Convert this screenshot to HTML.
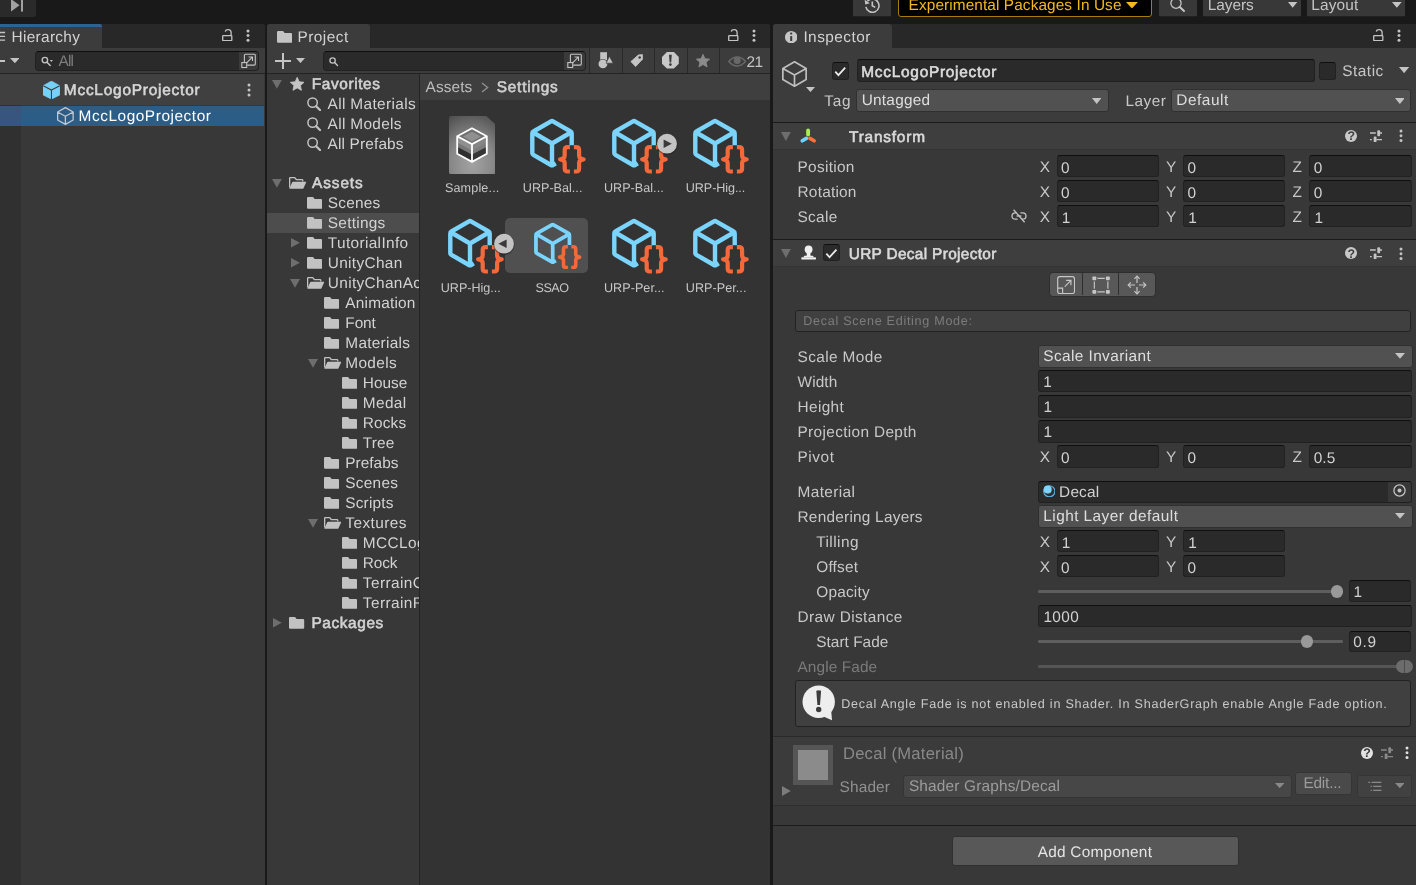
<!DOCTYPE html>
<html><head><meta charset="utf-8"><title>Unity Editor</title>
<style>
html,body{margin:0;padding:0;background:#191919;}
body{width:1416px;height:885px;position:relative;overflow:hidden;font-family:"Liberation Sans",sans-serif;font-size:15.4px;color:#d2d2d2;text-rendering:geometricPrecision;}
#r div,#r span,#r svg{position:absolute;box-sizing:border-box;}
#r span{white-space:nowrap;display:block;line-height:20px;}
#r{position:absolute;left:0;top:0;width:1416px;height:885px;overflow:hidden;will-change:transform;}
</style></head><body><div id="r">
<div style="left:0.00px;top:0.00px;width:1416.00px;height:24.00px;background:#191919;"></div>
<div style="left:0.00px;top:-3.00px;width:36.40px;height:20.20px;background:#2a2a2a;border-radius:0 0 2px 0;"></div>
<svg style="left:11.00px;top:0.00px;" width="13" height="12" viewBox="0 0 13 12"><path d="M0 -1V11.6L8.6 5.3Z" fill="#a2a2a2"/><rect x="10" y="-1" width="2" height="12.6" fill="#a2a2a2"/></svg>
<div style="left:853.10px;top:-3.00px;width:37.80px;height:20.40px;background:#383838;border-bottom:1.5px solid #212121;"></div>
<svg style="left:863.80px;top:-2.70px;" width="16.6" height="16.6" viewBox="0 0 16 16"><path d="M3.2 4.2A6.4 6.4 0 1 1 1.8 9.6" fill="none" stroke="#c4c4c4" stroke-width="1.5"/><path d="M0.6 2.6L1.2 7.2L5.6 6Z" fill="#c4c4c4"/><path d="M8 4.4V8.4L10.8 10" fill="none" stroke="#c4c4c4" stroke-width="1.5"/></svg>
<div style="left:898.00px;top:-4.00px;width:253.80px;height:20.70px;background:#000;border:1px solid #a67c10;border-radius:3px;"></div>
<span style="left:908.60px;top:-4px;font-size:15.4px;letter-spacing:0.089px;color:#f2b822;">Experimental Packages In Use</span>
<svg style="left:1125.90px;top:1.90px;" width="11.90" height="6.50" viewBox="0 0 11.90 6.50"><path d="M0 0H11.90L5.95 6.50Z" fill="#f2b822"/></svg>
<div style="left:1158.80px;top:-3.00px;width:38.20px;height:20.40px;background:#383838;border-bottom:1.5px solid #212121;"></div>
<svg style="left:1170.40px;top:-2.00px;" width="16" height="15" viewBox="0 0 16 15"><circle cx="6" cy="5.2" r="5.1" fill="none" stroke="#c4c4c4" stroke-width="1.3"/><path d="M9.8 9L14 13" stroke="#c4c4c4" stroke-width="2" stroke-linecap="round"/></svg>
<div style="left:1203.00px;top:-3.00px;width:97.80px;height:20.40px;background:#383838;border-bottom:1.5px solid #212121;"></div>
<span style="left:1207.80px;top:-4px;font-size:15.4px;letter-spacing:-0.040px;color:#c4c4c4;">Layers</span>
<svg style="left:1288.30px;top:2.10px;" width="9.30" height="5.80" viewBox="0 0 9.30 5.80"><path d="M0 0H9.30L4.65 5.80Z" fill="#c4c4c4"/></svg>
<div style="left:1306.70px;top:-3.00px;width:98.60px;height:20.40px;background:#383838;border-bottom:1.5px solid #212121;"></div>
<span style="left:1311.30px;top:-4px;font-size:15.4px;letter-spacing:0.160px;color:#c4c4c4;">Layout</span>
<svg style="left:1391.90px;top:2.10px;" width="9.70" height="5.80" viewBox="0 0 9.70 5.80"><path d="M0 0H9.70L4.85 5.80Z" fill="#c4c4c4"/></svg>
<div style="left:0.00px;top:24.00px;width:265.00px;height:861.00px;background:#383838;border-radius:0 3px 0 0;"></div>
<div style="left:0.00px;top:24.00px;width:265.00px;height:24.00px;background:#282828;border-radius:0 4px 0 0;"></div>
<div style="left:0.00px;top:24.00px;width:102.00px;height:24.00px;background:#3c3c3c;border-radius:0 2px 0 0;overflow:hidden;"><div style="left:0;top:0;width:102px;height:2.8px;background:#2d6291;"></div></div>
<svg style="left:0.00px;top:31.00px;" width="6" height="12" viewBox="0 0 6 12"><path d="M-4 1.5H5.1M-4 5.35H5.1M-4 9.2H5.1" stroke="#c4c4c4" stroke-width="1.3"/></svg>
<span style="left:11.50px;top:28px;font-size:15.4px;letter-spacing:0.325px;color:#d2d2d2;">Hierarchy</span>
<svg style="left:221.60px;top:28.60px;" width="11" height="12.5" viewBox="0 0 11 12.5"><rect x="0.7" y="6.6" width="9.1" height="5" rx="0.6" fill="none" stroke="#c4c4c4" stroke-width="1.3"/><path d="M9.1 6.4V3.6Q9.1 0.7 6.2 0.7Q3.6 0.7 3.3 2.6" fill="none" stroke="#c4c4c4" stroke-width="1.3"/></svg>
<svg style="left:245.00px;top:27.60px;" width="6" height="15.20" viewBox="0 0 6 15.20"><circle cx="3" cy="3.00" r="1.5" fill="#c4c4c4"/><circle cx="3" cy="7.60" r="1.5" fill="#c4c4c4"/><circle cx="3" cy="12.20" r="1.5" fill="#c4c4c4"/></svg>
<div style="left:0.00px;top:48.00px;width:265.00px;height:26.20px;background:#3c3c3c;border-bottom:1px solid #232323;"></div>
<div style="left:-2.00px;top:59.80px;width:6.70px;height:2.30px;background:#c4c4c4;"></div>
<svg style="left:9.60px;top:58.20px;" width="9.80" height="5.20" viewBox="0 0 9.80 5.20"><path d="M0 0H9.80L4.90 5.20Z" fill="#c4c4c4"/></svg>
<div style="left:35.10px;top:51.00px;width:224.10px;height:19.70px;background:#2a2a2a;border:1px solid #212121;border-top-color:#0f0f0f;border-radius:4px;"></div>
<div style="left:238.80px;top:52.00px;width:19.40px;height:17.70px;background:#3a3a3a;border-radius:0 3px 3px 0;"></div>
<svg style="left:40.50px;top:56.00px;" width="13" height="11" viewBox="0 0 13 11"><circle cx="3.9" cy="4.1" r="2.75" fill="none" stroke="#c4c4c4" stroke-width="1.35"/><path d="M6 6.2L9.2 9.5" stroke="#c4c4c4" stroke-width="1.5" stroke-linecap="round"/><path d="M8.9 4H11.9L10.4 5.9Z" fill="#c4c4c4"/></svg>
<span style="left:58.60px;top:52px;font-size:15.4px;letter-spacing:-0.850px;color:#7c7c7c;">All</span>
<svg style="left:241.00px;top:53.40px;" width="15.5" height="15.5" viewBox="0 0 15.5 15.5"><path d="M3.4 9.4V2.2Q3.4 1.2 4.4 1.2H13.3Q14.3 1.2 14.3 2.2V11.1Q14.3 12.1 13.3 12.1H6.2" fill="none" stroke="#c4c4c4" stroke-width="1.1"/><rect x="0.8" y="9.6" width="4.9" height="4.9" fill="none" stroke="#c4c4c4" stroke-width="1.1"/><path d="M5.6 9.9L11.3 4.2M7.6 4H11.5V7.9" fill="none" stroke="#c4c4c4" stroke-width="1.1"/></svg>
<div style="left:0.00px;top:74.00px;width:21.00px;height:811.00px;background:#303030;"></div>
<div style="left:0.00px;top:74.20px;width:264.20px;height:31.00px;background:#404040;"></div>
<svg style="left:42.80px;top:81.00px;" width="17" height="18.4" viewBox="0 0 17 18.4"><path d="M8.45 0L16.9 4.7V13.9L8.45 18.2L0 13.9V4.7Z" fill="#76d1fa" stroke="#76d1fa" stroke-width="0.6" stroke-linejoin="round"/><path d="M0.2 4.8L8.45 9.1L16.7 4.8M8.45 9.1V18.2" fill="none" stroke="#404040" stroke-width="1.1"/></svg>
<span style="left:63.80px;top:81px;font-size:15.4px;letter-spacing:0.787px;color:#d6d6d6;-webkit-text-stroke:0.6px #d6d6d6;">MccLogoProjector</span>
<svg style="left:245.90px;top:82.00px;" width="6" height="16.00" viewBox="0 0 6 16.00"><circle cx="3" cy="3.00" r="1.5" fill="#c4c4c4"/><circle cx="3" cy="8.00" r="1.5" fill="#c4c4c4"/><circle cx="3" cy="13.00" r="1.5" fill="#c4c4c4"/></svg>
<div style="left:0.00px;top:106.30px;width:264.20px;height:19.70px;background:#2c5d87;"></div>
<div style="left:0.00px;top:106.30px;width:21.00px;height:19.70px;background:#37557f;"></div>
<svg style="left:56.90px;top:107.10px;" width="16.80" height="18.00" viewBox="0 0 16.80 18.00"><path d="M8.40 0.65L16.15 5.00V13.00L8.40 17.35L0.65 13.00V5.00Z M0.65 5.00L8.40 9.20L16.15 5.00 M8.40 9.20V17.35" fill="none" stroke="#c3c8cf" stroke-width="1.3" stroke-linejoin="round"/></svg>
<span style="left:78.50px;top:107px;font-size:15.4px;letter-spacing:0.560px;color:#ffffff;">MccLogoProjector</span>
<div style="left:267.00px;top:24.00px;width:503.00px;height:861.00px;background:#383838;border-radius:3px 3px 0 0;"></div>
<div style="left:267.00px;top:24.00px;width:503.00px;height:24.00px;background:#282828;border-radius:3px 3px 0 0;"></div>
<div style="left:267.00px;top:24.00px;width:103.00px;height:24.00px;background:#3c3c3c;border-radius:3px 3px 0 0;"></div>
<svg style="left:277.30px;top:31.00px;" width="15.2" height="11.8" viewBox="0 0 15.2 11.8"><path d="M0 1.1Q0 0 1.1 0H5.6Q6.2 0 6.6 .5L7.6 2H14.1Q15.2 2 15.2 3.1V10.7Q15.2 11.8 14.1 11.8H1.1Q0 11.8 0 10.7Z" fill="#c4c4c4"/></svg>
<span style="left:297.40px;top:28px;font-size:15.4px;letter-spacing:0.483px;color:#d2d2d2;">Project</span>
<svg style="left:727.60px;top:28.80px;" width="11" height="12.5" viewBox="0 0 11 12.5"><rect x="0.7" y="6.6" width="9.1" height="5" rx="0.6" fill="none" stroke="#c4c4c4" stroke-width="1.3"/><path d="M9.1 6.4V3.6Q9.1 0.7 6.2 0.7Q3.6 0.7 3.3 2.6" fill="none" stroke="#c4c4c4" stroke-width="1.3"/></svg>
<svg style="left:750.90px;top:27.80px;" width="6" height="15.20" viewBox="0 0 6 15.20"><circle cx="3" cy="3.00" r="1.5" fill="#c4c4c4"/><circle cx="3" cy="7.60" r="1.5" fill="#c4c4c4"/><circle cx="3" cy="12.20" r="1.5" fill="#c4c4c4"/></svg>
<div style="left:267.00px;top:48.00px;width:503.00px;height:26.20px;background:#3c3c3c;border-bottom:1px solid #232323;"></div>
<div style="left:275.20px;top:60.00px;width:15.60px;height:2.00px;background:#c4c4c4;"></div>
<div style="left:282.00px;top:53.40px;width:2.00px;height:15.20px;background:#c4c4c4;"></div>
<svg style="left:296.20px;top:58.20px;" width="9.00" height="5.10" viewBox="0 0 9.00 5.10"><path d="M0 0H9.00L4.50 5.10Z" fill="#c4c4c4"/></svg>
<div style="left:323.10px;top:51.00px;width:262.50px;height:19.70px;background:#2a2a2a;border:1px solid #212121;border-top-color:#0f0f0f;border-radius:4px;"></div>
<div style="left:564.00px;top:52.00px;width:20.60px;height:17.70px;background:#3a3a3a;border-radius:0 3px 3px 0;"></div>
<svg style="left:329.00px;top:57.30px;" width="10" height="10" viewBox="0 0 10 10"><circle cx="3.6" cy="3.5" r="2.65" fill="none" stroke="#c4c4c4" stroke-width="1.3"/><path d="M5.6 5.5L8.5 8.4" stroke="#c4c4c4" stroke-width="1.4" stroke-linecap="round"/></svg>
<svg style="left:566.60px;top:53.40px;" width="15.5" height="15.5" viewBox="0 0 15.5 15.5"><path d="M3.4 9.4V2.2Q3.4 1.2 4.4 1.2H13.3Q14.3 1.2 14.3 2.2V11.1Q14.3 12.1 13.3 12.1H6.2" fill="none" stroke="#c4c4c4" stroke-width="1.1"/><rect x="0.8" y="9.6" width="4.9" height="4.9" fill="none" stroke="#c4c4c4" stroke-width="1.1"/><path d="M5.6 9.9L11.3 4.2M7.6 4H11.5V7.9" fill="none" stroke="#c4c4c4" stroke-width="1.1"/></svg>
<div style="left:589.20px;top:48.00px;width:1.20px;height:25.00px;background:#292929;"></div>
<div style="left:621.90px;top:48.00px;width:1.20px;height:25.00px;background:#292929;"></div>
<div style="left:653.90px;top:48.00px;width:1.20px;height:25.00px;background:#292929;"></div>
<div style="left:687.00px;top:48.00px;width:1.20px;height:25.00px;background:#292929;"></div>
<div style="left:718.80px;top:48.00px;width:1.20px;height:25.00px;background:#292929;"></div>
<svg style="left:598.00px;top:51.80px;" width="16" height="17" viewBox="0 0 16 17"><rect x="2.2" y="0.2" width="6.8" height="8" fill="#c4c4c4"/><circle cx="4.9" cy="11.9" r="4.9" fill="#3c3c3c"/><circle cx="4.9" cy="11.9" r="4.4" fill="#c4c4c4"/><path d="M11.4 4.2L15.2 11.2H8Z" fill="#c4c4c4" stroke="#3c3c3c" stroke-width="0.7"/></svg>
<svg style="left:630.40px;top:54.40px;" width="14" height="13.4" viewBox="0 0 14 13.4"><path d="M0.9 7.6L8.3 1L12.4 0.6L12.5 5.2L5.6 12.6Z" fill="#c4c4c4" stroke="#c4c4c4" stroke-width="0.8" stroke-linejoin="round"/><circle cx="9.7" cy="3.5" r="1.3" fill="#3c3c3c"/></svg>
<svg style="left:661.80px;top:52.00px;" width="16.8" height="16.6" viewBox="0 0 16.8 16.6"><path d="M4.9 0H11.9L16.8 4.9V11.7L11.9 16.6H4.9L0 11.7V4.9Z" fill="#c8c8c8"/><path d="M7 2.8H9.8L9.2 10.5H7.6Z" fill="#3c3c3c"/><circle cx="8.4" cy="12.6" r="1.35" fill="#3c3c3c"/></svg>
<svg style="left:696.00px;top:54.00px;" width="14" height="14" viewBox="0 0 14 14"><polygon points="7.00,0.30 8.93,4.64 13.66,5.14 10.13,8.32 11.11,12.96 7.00,10.59 2.89,12.96 3.87,8.32 0.34,5.14 5.07,4.64" fill="#8c8c8c" stroke="#8c8c8c" stroke-width="0.8" stroke-linejoin="round"/></svg>
<svg style="left:727.80px;top:55.60px;" width="18.4" height="11" viewBox="0 0 18.4 11"><path d="M0.8 5.4Q4.6 0.9 9.2 0.9Q13.8 0.9 17.6 5.4Q13.8 9.9 9.2 9.9Q4.6 9.9 0.8 5.4Z" fill="none" stroke="#686868" stroke-width="1.5"/><circle cx="9.2" cy="4.4" r="3.5" fill="#686868"/></svg>
<span style="left:746.60px;top:53px;font-size:15.4px;letter-spacing:-0.600px;color:#c4c4c4;">21</span>
<div style="left:418.80px;top:74.00px;width:1.20px;height:811.00px;background:#242424;"></div>
<div style="left:420.00px;top:74.00px;width:350.00px;height:811.00px;background:#333333;"></div>
<div style="left:267.00px;top:213.20px;width:151.80px;height:19.80px;background:#4d4d4d;"></div>
<svg style="left:272.20px;top:80.00px;" width="9.80" height="8.80" viewBox="0 0 9.80 8.80"><path d="M0 0H9.80L4.90 8.80Z" fill="#6e6e6e"/></svg>
<svg style="left:289.60px;top:77.20px;" width="14.4" height="14.4" viewBox="0 0 14 14"><polygon points="7.00,0.30 8.93,4.64 13.66,5.14 10.13,8.32 11.11,12.96 7.00,10.59 2.89,12.96 3.87,8.32 0.34,5.14 5.07,4.64" fill="#c4c4c4" stroke="#c4c4c4" stroke-width="0.8" stroke-linejoin="round"/></svg>
<span style="left:311.80px;top:75px;font-size:15.4px;letter-spacing:0.600px;color:#d2d2d2;-webkit-text-stroke:0.6px #d2d2d2;">Favorites</span>
<svg style="left:306.60px;top:97.00px;" width="14.3" height="14.3" viewBox="0 0 14.3 14.3"><circle cx="5.6" cy="5.6" r="4.7" fill="none" stroke="#c2c2c2" stroke-width="1.5"/><path d="M9.2 9.2L13.3 13.3" stroke="#c2c2c2" stroke-width="2.2" stroke-linecap="round"/></svg>
<span style="left:327.60px;top:95px;font-size:15.4px;letter-spacing:0.350px;color:#d2d2d2;">All Materials</span>
<svg style="left:306.60px;top:117.00px;" width="14.3" height="14.3" viewBox="0 0 14.3 14.3"><circle cx="5.6" cy="5.6" r="4.7" fill="none" stroke="#c2c2c2" stroke-width="1.5"/><path d="M9.2 9.2L13.3 13.3" stroke="#c2c2c2" stroke-width="2.2" stroke-linecap="round"/></svg>
<span style="left:327.60px;top:115px;font-size:15.4px;letter-spacing:0.322px;color:#d2d2d2;">All Models</span>
<svg style="left:306.60px;top:137.00px;" width="14.3" height="14.3" viewBox="0 0 14.3 14.3"><circle cx="5.6" cy="5.6" r="4.7" fill="none" stroke="#c2c2c2" stroke-width="1.5"/><path d="M9.2 9.2L13.3 13.3" stroke="#c2c2c2" stroke-width="2.2" stroke-linecap="round"/></svg>
<span style="left:327.60px;top:135px;font-size:15.4px;letter-spacing:0.150px;color:#d2d2d2;">All Prefabs</span>
<svg style="left:272.20px;top:179.20px;" width="9.80" height="8.80" viewBox="0 0 9.80 8.80"><path d="M0 0H9.80L4.90 8.80Z" fill="#6e6e6e"/></svg>
<svg style="left:289.40px;top:177.30px;" width="17.4" height="11.8" viewBox="0 0 17.4 11.8"><path d="M.65 10.6V1.3Q.65 .65 1.3 .65H5.4Q5.8 .65 6.1 1L7.3 2.55H13.1Q13.75 2.55 13.75 3.2V4.6" fill="none" stroke="#c2c2c2" stroke-width="1.3"/><path d="M.3 11.8L3.2 5.3Q3.5 4.7 4.1 4.7H16.6Q17.5 4.7 17.1 5.5L14.5 11.2Q14.2 11.8 13.6 11.8Z" fill="#c2c2c2"/></svg>
<span style="left:312.10px;top:174px;font-size:15.4px;letter-spacing:0.880px;color:#d2d2d2;-webkit-text-stroke:0.6px #d2d2d2;">Assets</span>
<svg style="left:306.60px;top:197.20px;" width="15.2" height="11.8" viewBox="0 0 15.2 11.8"><path d="M0 1.1Q0 0 1.1 0H5.6Q6.2 0 6.6 .5L7.6 2H14.1Q15.2 2 15.2 3.1V10.7Q15.2 11.8 14.1 11.8H1.1Q0 11.8 0 10.7Z" fill="#c2c2c2"/></svg>
<span style="left:327.80px;top:194px;font-size:15.4px;letter-spacing:0.220px;color:#d2d2d2;">Scenes</span>
<svg style="left:306.60px;top:217.20px;" width="15.2" height="11.8" viewBox="0 0 15.2 11.8"><path d="M0 1.1Q0 0 1.1 0H5.6Q6.2 0 6.6 .5L7.6 2H14.1Q15.2 2 15.2 3.1V10.7Q15.2 11.8 14.1 11.8H1.1Q0 11.8 0 10.7Z" fill="#c2c2c2"/></svg>
<span style="left:327.80px;top:214px;font-size:15.4px;letter-spacing:0.271px;color:#d2d2d2;">Settings</span>
<svg style="left:306.60px;top:237.20px;" width="15.2" height="11.8" viewBox="0 0 15.2 11.8"><path d="M0 1.1Q0 0 1.1 0H5.6Q6.2 0 6.6 .5L7.6 2H14.1Q15.2 2 15.2 3.1V10.7Q15.2 11.8 14.1 11.8H1.1Q0 11.8 0 10.7Z" fill="#c2c2c2"/></svg>
<svg style="left:291.40px;top:238.20px;" width="8.90" height="9.40" viewBox="0 0 8.90 9.40"><path d="M0 0L8.90 4.70L0 9.40Z" fill="#6e6e6e"/></svg>
<span style="left:327.80px;top:234px;font-size:15.4px;letter-spacing:0.355px;color:#d2d2d2;">TutorialInfo</span>
<svg style="left:306.60px;top:257.20px;" width="15.2" height="11.8" viewBox="0 0 15.2 11.8"><path d="M0 1.1Q0 0 1.1 0H5.6Q6.2 0 6.6 .5L7.6 2H14.1Q15.2 2 15.2 3.1V10.7Q15.2 11.8 14.1 11.8H1.1Q0 11.8 0 10.7Z" fill="#c2c2c2"/></svg>
<svg style="left:291.40px;top:258.20px;" width="8.90" height="9.40" viewBox="0 0 8.90 9.40"><path d="M0 0L8.90 4.70L0 9.40Z" fill="#6e6e6e"/></svg>
<span style="left:327.80px;top:254px;font-size:15.4px;letter-spacing:0.325px;color:#d2d2d2;">UnityChan</span>
<svg style="left:306.60px;top:277.20px;" width="17.4" height="11.8" viewBox="0 0 17.4 11.8"><path d="M.65 10.6V1.3Q.65 .65 1.3 .65H5.4Q5.8 .65 6.1 1L7.3 2.55H13.1Q13.75 2.55 13.75 3.2V4.6" fill="none" stroke="#c2c2c2" stroke-width="1.3"/><path d="M.3 11.8L3.2 5.3Q3.5 4.7 4.1 4.7H16.6Q17.5 4.7 17.1 5.5L14.5 11.2Q14.2 11.8 13.6 11.8Z" fill="#c2c2c2"/></svg>
<svg style="left:290.20px;top:279.00px;" width="10.00" height="8.80" viewBox="0 0 10.00 8.80"><path d="M0 0H10.00L5.00 8.80Z" fill="#6e6e6e"/></svg>
<span style="left:327.80px;top:274px;font-size:15.4px;letter-spacing:0.337px;color:#d2d2d2;width:90.80px;overflow:hidden;">UnityChanAct</span>
<svg style="left:324.10px;top:297.20px;" width="15.2" height="11.8" viewBox="0 0 15.2 11.8"><path d="M0 1.1Q0 0 1.1 0H5.6Q6.2 0 6.6 .5L7.6 2H14.1Q15.2 2 15.2 3.1V10.7Q15.2 11.8 14.1 11.8H1.1Q0 11.8 0 10.7Z" fill="#c2c2c2"/></svg>
<span style="left:345.30px;top:294px;font-size:15.4px;letter-spacing:0.200px;color:#d2d2d2;">Animation</span>
<svg style="left:324.10px;top:317.20px;" width="15.2" height="11.8" viewBox="0 0 15.2 11.8"><path d="M0 1.1Q0 0 1.1 0H5.6Q6.2 0 6.6 .5L7.6 2H14.1Q15.2 2 15.2 3.1V10.7Q15.2 11.8 14.1 11.8H1.1Q0 11.8 0 10.7Z" fill="#c2c2c2"/></svg>
<span style="left:345.30px;top:314px;font-size:15.4px;letter-spacing:-0.067px;color:#d2d2d2;">Font</span>
<svg style="left:324.10px;top:337.20px;" width="15.2" height="11.8" viewBox="0 0 15.2 11.8"><path d="M0 1.1Q0 0 1.1 0H5.6Q6.2 0 6.6 .5L7.6 2H14.1Q15.2 2 15.2 3.1V10.7Q15.2 11.8 14.1 11.8H1.1Q0 11.8 0 10.7Z" fill="#c2c2c2"/></svg>
<span style="left:345.30px;top:334px;font-size:15.4px;letter-spacing:0.275px;color:#d2d2d2;">Materials</span>
<svg style="left:324.10px;top:357.20px;" width="17.4" height="11.8" viewBox="0 0 17.4 11.8"><path d="M.65 10.6V1.3Q.65 .65 1.3 .65H5.4Q5.8 .65 6.1 1L7.3 2.55H13.1Q13.75 2.55 13.75 3.2V4.6" fill="none" stroke="#c2c2c2" stroke-width="1.3"/><path d="M.3 11.8L3.2 5.3Q3.5 4.7 4.1 4.7H16.6Q17.5 4.7 17.1 5.5L14.5 11.2Q14.2 11.8 13.6 11.8Z" fill="#c2c2c2"/></svg>
<svg style="left:307.70px;top:359.00px;" width="10.00" height="8.80" viewBox="0 0 10.00 8.80"><path d="M0 0H10.00L5.00 8.80Z" fill="#6e6e6e"/></svg>
<span style="left:345.30px;top:354px;font-size:15.4px;letter-spacing:0.340px;color:#d2d2d2;">Models</span>
<svg style="left:341.60px;top:377.20px;" width="15.2" height="11.8" viewBox="0 0 15.2 11.8"><path d="M0 1.1Q0 0 1.1 0H5.6Q6.2 0 6.6 .5L7.6 2H14.1Q15.2 2 15.2 3.1V10.7Q15.2 11.8 14.1 11.8H1.1Q0 11.8 0 10.7Z" fill="#c2c2c2"/></svg>
<span style="left:362.80px;top:374px;font-size:15.4px;letter-spacing:-0.025px;color:#d2d2d2;">House</span>
<svg style="left:341.60px;top:397.20px;" width="15.2" height="11.8" viewBox="0 0 15.2 11.8"><path d="M0 1.1Q0 0 1.1 0H5.6Q6.2 0 6.6 .5L7.6 2H14.1Q15.2 2 15.2 3.1V10.7Q15.2 11.8 14.1 11.8H1.1Q0 11.8 0 10.7Z" fill="#c2c2c2"/></svg>
<span style="left:362.80px;top:394px;font-size:15.4px;letter-spacing:0.375px;color:#d2d2d2;">Medal</span>
<svg style="left:341.60px;top:417.20px;" width="15.2" height="11.8" viewBox="0 0 15.2 11.8"><path d="M0 1.1Q0 0 1.1 0H5.6Q6.2 0 6.6 .5L7.6 2H14.1Q15.2 2 15.2 3.1V10.7Q15.2 11.8 14.1 11.8H1.1Q0 11.8 0 10.7Z" fill="#c2c2c2"/></svg>
<span style="left:362.80px;top:414px;font-size:15.4px;letter-spacing:0.150px;color:#d2d2d2;">Rocks</span>
<svg style="left:341.60px;top:437.20px;" width="15.2" height="11.8" viewBox="0 0 15.2 11.8"><path d="M0 1.1Q0 0 1.1 0H5.6Q6.2 0 6.6 .5L7.6 2H14.1Q15.2 2 15.2 3.1V10.7Q15.2 11.8 14.1 11.8H1.1Q0 11.8 0 10.7Z" fill="#c2c2c2"/></svg>
<span style="left:362.80px;top:434px;font-size:15.4px;letter-spacing:0.133px;color:#d2d2d2;">Tree</span>
<svg style="left:324.10px;top:457.20px;" width="15.2" height="11.8" viewBox="0 0 15.2 11.8"><path d="M0 1.1Q0 0 1.1 0H5.6Q6.2 0 6.6 .5L7.6 2H14.1Q15.2 2 15.2 3.1V10.7Q15.2 11.8 14.1 11.8H1.1Q0 11.8 0 10.7Z" fill="#c2c2c2"/></svg>
<span style="left:345.30px;top:454px;font-size:15.4px;letter-spacing:0.017px;color:#d2d2d2;">Prefabs</span>
<svg style="left:324.10px;top:477.20px;" width="15.2" height="11.8" viewBox="0 0 15.2 11.8"><path d="M0 1.1Q0 0 1.1 0H5.6Q6.2 0 6.6 .5L7.6 2H14.1Q15.2 2 15.2 3.1V10.7Q15.2 11.8 14.1 11.8H1.1Q0 11.8 0 10.7Z" fill="#c2c2c2"/></svg>
<span style="left:345.30px;top:474px;font-size:15.4px;letter-spacing:0.260px;color:#d2d2d2;">Scenes</span>
<svg style="left:324.10px;top:497.20px;" width="15.2" height="11.8" viewBox="0 0 15.2 11.8"><path d="M0 1.1Q0 0 1.1 0H5.6Q6.2 0 6.6 .5L7.6 2H14.1Q15.2 2 15.2 3.1V10.7Q15.2 11.8 14.1 11.8H1.1Q0 11.8 0 10.7Z" fill="#c2c2c2"/></svg>
<span style="left:345.30px;top:494px;font-size:15.4px;letter-spacing:0.183px;color:#d2d2d2;">Scripts</span>
<svg style="left:324.10px;top:517.20px;" width="17.4" height="11.8" viewBox="0 0 17.4 11.8"><path d="M.65 10.6V1.3Q.65 .65 1.3 .65H5.4Q5.8 .65 6.1 1L7.3 2.55H13.1Q13.75 2.55 13.75 3.2V4.6" fill="none" stroke="#c2c2c2" stroke-width="1.3"/><path d="M.3 11.8L3.2 5.3Q3.5 4.7 4.1 4.7H16.6Q17.5 4.7 17.1 5.5L14.5 11.2Q14.2 11.8 13.6 11.8Z" fill="#c2c2c2"/></svg>
<svg style="left:307.70px;top:519.00px;" width="10.00" height="8.80" viewBox="0 0 10.00 8.80"><path d="M0 0H10.00L5.00 8.80Z" fill="#6e6e6e"/></svg>
<span style="left:345.30px;top:514px;font-size:15.4px;letter-spacing:0.429px;color:#d2d2d2;">Textures</span>
<svg style="left:341.60px;top:537.20px;" width="15.2" height="11.8" viewBox="0 0 15.2 11.8"><path d="M0 1.1Q0 0 1.1 0H5.6Q6.2 0 6.6 .5L7.6 2H14.1Q15.2 2 15.2 3.1V10.7Q15.2 11.8 14.1 11.8H1.1Q0 11.8 0 10.7Z" fill="#c2c2c2"/></svg>
<span style="left:362.80px;top:534px;font-size:15.4px;letter-spacing:0.425px;color:#d2d2d2;width:55.80px;overflow:hidden;">MCCLogo</span>
<svg style="left:341.60px;top:557.20px;" width="15.2" height="11.8" viewBox="0 0 15.2 11.8"><path d="M0 1.1Q0 0 1.1 0H5.6Q6.2 0 6.6 .5L7.6 2H14.1Q15.2 2 15.2 3.1V10.7Q15.2 11.8 14.1 11.8H1.1Q0 11.8 0 10.7Z" fill="#c2c2c2"/></svg>
<span style="left:362.80px;top:554px;font-size:15.4px;letter-spacing:-0.167px;color:#d2d2d2;">Rock</span>
<svg style="left:341.60px;top:577.20px;" width="15.2" height="11.8" viewBox="0 0 15.2 11.8"><path d="M0 1.1Q0 0 1.1 0H5.6Q6.2 0 6.6 .5L7.6 2H14.1Q15.2 2 15.2 3.1V10.7Q15.2 11.8 14.1 11.8H1.1Q0 11.8 0 10.7Z" fill="#c2c2c2"/></svg>
<span style="left:362.80px;top:574px;font-size:15.4px;letter-spacing:0.429px;color:#d2d2d2;width:55.80px;overflow:hidden;">TerrainG</span>
<svg style="left:341.60px;top:597.20px;" width="15.2" height="11.8" viewBox="0 0 15.2 11.8"><path d="M0 1.1Q0 0 1.1 0H5.6Q6.2 0 6.6 .5L7.6 2H14.1Q15.2 2 15.2 3.1V10.7Q15.2 11.8 14.1 11.8H1.1Q0 11.8 0 10.7Z" fill="#c2c2c2"/></svg>
<span style="left:362.80px;top:594px;font-size:15.4px;letter-spacing:0.429px;color:#d2d2d2;width:55.80px;overflow:hidden;">TerrainR</span>
<svg style="left:273.20px;top:618.20px;" width="8.80" height="9.40" viewBox="0 0 8.80 9.40"><path d="M0 0L8.80 4.70L0 9.40Z" fill="#6e6e6e"/></svg>
<svg style="left:289.40px;top:617.20px;" width="15.2" height="11.8" viewBox="0 0 15.2 11.8"><path d="M0 1.1Q0 0 1.1 0H5.6Q6.2 0 6.6 .5L7.6 2H14.1Q15.2 2 15.2 3.1V10.7Q15.2 11.8 14.1 11.8H1.1Q0 11.8 0 10.7Z" fill="#c2c2c2"/></svg>
<span style="left:311.50px;top:614px;font-size:15.4px;letter-spacing:0.600px;color:#d2d2d2;-webkit-text-stroke:0.6px #d2d2d2;">Packages</span>
<div style="left:420.00px;top:74.00px;width:350.00px;height:26.10px;background:#3f3f3f;"></div>
<span style="left:425.60px;top:78px;font-size:15.4px;letter-spacing:0.080px;color:#bdbdbd;">Assets</span>
<svg style="left:480.60px;top:81.60px;" width="8" height="11" viewBox="0 0 8 11"><path d="M1 1L6.6 5.5L1 10" fill="none" stroke="#8e8e8e" stroke-width="1.4"/></svg>
<span style="left:496.70px;top:78px;font-size:15.4px;letter-spacing:0.786px;color:#d0d0d0;-webkit-text-stroke:0.6px #d0d0d0;">Settings</span>
<svg style="left:448.80px;top:115.80px;" width="46.4" height="58.4" viewBox="0 0 46.4 58.4"><defs><radialGradient id="sg" cx="50%" cy="82%" r="92%"><stop offset="0" stop-color="#a3a3a3"/><stop offset="0.5" stop-color="#888888"/><stop offset="1" stop-color="#505050"/></radialGradient></defs><path d="M2.4 0H37.4L46.4 8.4V56Q46.4 58.4 44 58.4H2.4Q0 58.4 0 56V2.4Q0 0 2.4 0Z" fill="url(#sg)"/><g transform="translate(7.3,11.4)"><path d="M15.7 0.9L30.5 8.8L15.7 16.7L0.9 8.8Z" fill="#717171"/><path d="M15.7 4.4L24.6 9.2L15.7 14L6.8 9.2Z" fill="#909090"/><path d="M0.9 8.80L15.7 16.70L15.7 23.00L0.9 15.10Z" fill="#8f8f8f"/><path d="M0.9 15.10L15.7 23.00L15.7 27.20L0.9 19.30Z" fill="#777777"/><path d="M0.9 19.30L15.7 27.20L15.7 34.20L0.9 26.30Z" fill="#2f2f2f"/><path d="M15.7 16.70L30.5 8.80L30.5 15.10L15.7 23.00Z" fill="#858585"/><path d="M15.7 23.00L30.5 15.10L30.5 19.30L15.7 27.20Z" fill="#7c7c7c"/><path d="M15.7 27.20L30.5 19.30L30.5 26.30L15.7 34.20Z" fill="#363636"/><path d="M15.7 0.9L30.5 8.8V26.3L15.7 34.5L0.9 26.3V8.8Z M0.9 8.8L15.7 16.7L30.5 8.8M15.7 16.7V34.5" fill="none" stroke="#ffffff" stroke-width="1.8" stroke-linejoin="round"/></g></svg>
<span style="left:444.90px;top:178px;font-size:12.6px;letter-spacing:0.150px;color:#c6c6c6;">Sample...</span>
<svg style="left:529.90px;top:117.80px;" width="57.00" height="56.00" viewBox="0 0 57 56"><path d="M41.7 27.2V15.4Q41.7 14.1 40.6 13.5L23 3.3Q22 2.7 21 3.3L3.4 13.5Q2.3 14.1 2.3 15.4V34.9Q2.3 36.2 3.4 36.8L21 47Q22 47.6 23 47L25.8 45.4" fill="none" stroke="#7ad4fc" stroke-width="4.4" stroke-linecap="butt" stroke-linejoin="round"/><path d="M3.2 14.5L22 25.5L40.8 14.5M22 25.5V47.2" fill="none" stroke="#7ad4fc" stroke-width="4.4" stroke-linejoin="round"/><path d="M39.9 29.1H37.7Q34.7 29.1 34.7 32.1V37.5Q34.7 40.9 30.1 41.3Q34.7 41.7 34.7 45.1V50.5Q34.7 53.5 37.7 53.5H39.9" fill="none" stroke="#f4693b" stroke-width="4.2" stroke-linejoin="round"/><path d="M43.9 29.1H46.1Q49.1 29.1 49.1 32.1V37.5Q49.1 40.9 53.7 41.3Q49.1 41.7 49.1 45.1V50.5Q49.1 53.5 46.1 53.5H43.9" fill="none" stroke="#f4693b" stroke-width="4.2" stroke-linejoin="round"/></svg>
<span style="left:522.80px;top:178px;font-size:12.6px;letter-spacing:0.011px;color:#c6c6c6;">URP-Bal...</span>
<svg style="left:611.90px;top:117.50px;" width="57.00" height="56.00" viewBox="0 0 57 56"><path d="M41.7 27.2V15.4Q41.7 14.1 40.6 13.5L23 3.3Q22 2.7 21 3.3L3.4 13.5Q2.3 14.1 2.3 15.4V34.9Q2.3 36.2 3.4 36.8L21 47Q22 47.6 23 47L25.8 45.4" fill="none" stroke="#7ad4fc" stroke-width="4.4" stroke-linecap="butt" stroke-linejoin="round"/><path d="M3.2 14.5L22 25.5L40.8 14.5M22 25.5V47.2" fill="none" stroke="#7ad4fc" stroke-width="4.4" stroke-linejoin="round"/><path d="M39.9 29.1H37.7Q34.7 29.1 34.7 32.1V37.5Q34.7 40.9 30.1 41.3Q34.7 41.7 34.7 45.1V50.5Q34.7 53.5 37.7 53.5H39.9" fill="none" stroke="#f4693b" stroke-width="4.2" stroke-linejoin="round"/><path d="M43.9 29.1H46.1Q49.1 29.1 49.1 32.1V37.5Q49.1 40.9 53.7 41.3Q49.1 41.7 49.1 45.1V50.5Q49.1 53.5 46.1 53.5H43.9" fill="none" stroke="#f4693b" stroke-width="4.2" stroke-linejoin="round"/></svg>
<span style="left:603.90px;top:178px;font-size:12.6px;letter-spacing:0.033px;color:#c6c6c6;">URP-Bal...</span>
<svg style="left:693.10px;top:117.50px;" width="57.00" height="56.00" viewBox="0 0 57 56"><path d="M41.7 27.2V15.4Q41.7 14.1 40.6 13.5L23 3.3Q22 2.7 21 3.3L3.4 13.5Q2.3 14.1 2.3 15.4V34.9Q2.3 36.2 3.4 36.8L21 47Q22 47.6 23 47L25.8 45.4" fill="none" stroke="#7ad4fc" stroke-width="4.4" stroke-linecap="butt" stroke-linejoin="round"/><path d="M3.2 14.5L22 25.5L40.8 14.5M22 25.5V47.2" fill="none" stroke="#7ad4fc" stroke-width="4.4" stroke-linejoin="round"/><path d="M39.9 29.1H37.7Q34.7 29.1 34.7 32.1V37.5Q34.7 40.9 30.1 41.3Q34.7 41.7 34.7 45.1V50.5Q34.7 53.5 37.7 53.5H39.9" fill="none" stroke="#f4693b" stroke-width="4.2" stroke-linejoin="round"/><path d="M43.9 29.1H46.1Q49.1 29.1 49.1 32.1V37.5Q49.1 40.9 53.7 41.3Q49.1 41.7 49.1 45.1V50.5Q49.1 53.5 46.1 53.5H43.9" fill="none" stroke="#f4693b" stroke-width="4.2" stroke-linejoin="round"/></svg>
<span style="left:685.80px;top:178px;font-size:12.6px;letter-spacing:-0.078px;color:#c6c6c6;">URP-Hig...</span>
<svg style="left:654.90px;top:132.20px;" width="24" height="25" viewBox="0 0 24 25"><circle cx="12" cy="12.6" r="10.6" fill="#1e1e1e" opacity="0.45"/><circle cx="12" cy="11.7" r="9.9" fill="#c3c3c3"/><path d="M8.6 7.4L16.8 11.7L8.6 16Z" fill="#3a3a3a"/></svg>
<svg style="left:448.00px;top:217.50px;" width="57.00" height="56.00" viewBox="0 0 57 56"><path d="M41.7 27.2V15.4Q41.7 14.1 40.6 13.5L23 3.3Q22 2.7 21 3.3L3.4 13.5Q2.3 14.1 2.3 15.4V34.9Q2.3 36.2 3.4 36.8L21 47Q22 47.6 23 47L25.8 45.4" fill="none" stroke="#7ad4fc" stroke-width="4.4" stroke-linecap="butt" stroke-linejoin="round"/><path d="M3.2 14.5L22 25.5L40.8 14.5M22 25.5V47.2" fill="none" stroke="#7ad4fc" stroke-width="4.4" stroke-linejoin="round"/><path d="M39.9 29.1H37.7Q34.7 29.1 34.7 32.1V37.5Q34.7 40.9 30.1 41.3Q34.7 41.7 34.7 45.1V50.5Q34.7 53.5 37.7 53.5H39.9" fill="none" stroke="#f4693b" stroke-width="4.2" stroke-linejoin="round"/><path d="M43.9 29.1H46.1Q49.1 29.1 49.1 32.1V37.5Q49.1 40.9 53.7 41.3Q49.1 41.7 49.1 45.1V50.5Q49.1 53.5 46.1 53.5H43.9" fill="none" stroke="#f4693b" stroke-width="4.2" stroke-linejoin="round"/></svg>
<span style="left:440.80px;top:278px;font-size:12.6px;letter-spacing:-0.033px;color:#c6c6c6;">URP-Hig...</span>
<div style="left:504.90px;top:217.80px;width:83.50px;height:55.40px;background:#505050;border-radius:5px;"></div>
<svg style="left:492.10px;top:232.20px;" width="24" height="25" viewBox="0 0 24 25"><circle cx="12" cy="12.6" r="10.6" fill="#1e1e1e" opacity="0.45"/><circle cx="12" cy="11.7" r="9.9" fill="#c3c3c3"/><path d="M14.6 7.4L6.4 11.7L14.6 16Z" fill="#3a3a3a"/></svg>
<svg style="left:533.80px;top:221.60px;" width="48.45" height="47.60" viewBox="0 0 57 56"><path d="M41.7 27.2V15.4Q41.7 14.1 40.6 13.5L23 3.3Q22 2.7 21 3.3L3.4 13.5Q2.3 14.1 2.3 15.4V34.9Q2.3 36.2 3.4 36.8L21 47Q22 47.6 23 47L25.8 45.4" fill="none" stroke="#7ad4fc" stroke-width="4.4" stroke-linecap="butt" stroke-linejoin="round"/><path d="M3.2 14.5L22 25.5L40.8 14.5M22 25.5V47.2" fill="none" stroke="#7ad4fc" stroke-width="4.4" stroke-linejoin="round"/><path d="M39.9 29.1H37.7Q34.7 29.1 34.7 32.1V37.5Q34.7 40.9 30.1 41.3Q34.7 41.7 34.7 45.1V50.5Q34.7 53.5 37.7 53.5H39.9" fill="none" stroke="#f4693b" stroke-width="4.2" stroke-linejoin="round"/><path d="M43.9 29.1H46.1Q49.1 29.1 49.1 32.1V37.5Q49.1 40.9 53.7 41.3Q49.1 41.7 49.1 45.1V50.5Q49.1 53.5 46.1 53.5H43.9" fill="none" stroke="#f4693b" stroke-width="4.2" stroke-linejoin="round"/></svg>
<span style="left:535.60px;top:278px;font-size:12.6px;letter-spacing:-0.533px;color:#c6c6c6;">SSAO</span>
<svg style="left:611.90px;top:217.50px;" width="57.00" height="56.00" viewBox="0 0 57 56"><path d="M41.7 27.2V15.4Q41.7 14.1 40.6 13.5L23 3.3Q22 2.7 21 3.3L3.4 13.5Q2.3 14.1 2.3 15.4V34.9Q2.3 36.2 3.4 36.8L21 47Q22 47.6 23 47L25.8 45.4" fill="none" stroke="#7ad4fc" stroke-width="4.4" stroke-linecap="butt" stroke-linejoin="round"/><path d="M3.2 14.5L22 25.5L40.8 14.5M22 25.5V47.2" fill="none" stroke="#7ad4fc" stroke-width="4.4" stroke-linejoin="round"/><path d="M39.9 29.1H37.7Q34.7 29.1 34.7 32.1V37.5Q34.7 40.9 30.1 41.3Q34.7 41.7 34.7 45.1V50.5Q34.7 53.5 37.7 53.5H39.9" fill="none" stroke="#f4693b" stroke-width="4.2" stroke-linejoin="round"/><path d="M43.9 29.1H46.1Q49.1 29.1 49.1 32.1V37.5Q49.1 40.9 53.7 41.3Q49.1 41.7 49.1 45.1V50.5Q49.1 53.5 46.1 53.5H43.9" fill="none" stroke="#f4693b" stroke-width="4.2" stroke-linejoin="round"/></svg>
<span style="left:603.90px;top:278px;font-size:12.6px;letter-spacing:0.056px;color:#c6c6c6;">URP-Per...</span>
<svg style="left:693.10px;top:217.50px;" width="57.00" height="56.00" viewBox="0 0 57 56"><path d="M41.7 27.2V15.4Q41.7 14.1 40.6 13.5L23 3.3Q22 2.7 21 3.3L3.4 13.5Q2.3 14.1 2.3 15.4V34.9Q2.3 36.2 3.4 36.8L21 47Q22 47.6 23 47L25.8 45.4" fill="none" stroke="#7ad4fc" stroke-width="4.4" stroke-linecap="butt" stroke-linejoin="round"/><path d="M3.2 14.5L22 25.5L40.8 14.5M22 25.5V47.2" fill="none" stroke="#7ad4fc" stroke-width="4.4" stroke-linejoin="round"/><path d="M39.9 29.1H37.7Q34.7 29.1 34.7 32.1V37.5Q34.7 40.9 30.1 41.3Q34.7 41.7 34.7 45.1V50.5Q34.7 53.5 37.7 53.5H39.9" fill="none" stroke="#f4693b" stroke-width="4.2" stroke-linejoin="round"/><path d="M43.9 29.1H46.1Q49.1 29.1 49.1 32.1V37.5Q49.1 40.9 53.7 41.3Q49.1 41.7 49.1 45.1V50.5Q49.1 53.5 46.1 53.5H43.9" fill="none" stroke="#f4693b" stroke-width="4.2" stroke-linejoin="round"/></svg>
<span style="left:685.80px;top:278px;font-size:12.6px;letter-spacing:0.044px;color:#c6c6c6;">URP-Per...</span>
<div style="left:773.00px;top:24.00px;width:647.00px;height:861.00px;background:#383838;border-radius:3px 0 0 0;"></div>
<div style="left:773.00px;top:24.00px;width:647.00px;height:24.00px;background:#282828;border-radius:3px 0 0 0;"></div>
<div style="left:773.00px;top:24.00px;width:119.00px;height:24.00px;background:#3c3c3c;border-radius:3px 3px 0 0;"></div>
<svg style="left:784.80px;top:30.80px;" width="12.4" height="12.4" viewBox="0 0 12.4 12.4"><circle cx="6.2" cy="6.2" r="6.2" fill="#c6c6c6"/><rect x="5.2" y="5.1" width="2" height="4.9" fill="#3c3c3c"/><rect x="5.2" y="1.6" width="2" height="1.9" fill="#3c3c3c"/></svg>
<span style="left:803.40px;top:28px;font-size:15.4px;letter-spacing:0.450px;color:#d2d2d2;">Inspector</span>
<svg style="left:1372.80px;top:28.80px;" width="11" height="12.5" viewBox="0 0 11 12.5"><rect x="0.7" y="6.6" width="9.1" height="5" rx="0.6" fill="none" stroke="#c4c4c4" stroke-width="1.3"/><path d="M9.1 6.4V3.6Q9.1 0.7 6.2 0.7Q3.6 0.7 3.3 2.6" fill="none" stroke="#c4c4c4" stroke-width="1.3"/></svg>
<svg style="left:1396.00px;top:27.80px;" width="6" height="15.20" viewBox="0 0 6 15.20"><circle cx="3" cy="3.00" r="1.5" fill="#c4c4c4"/><circle cx="3" cy="7.60" r="1.5" fill="#c4c4c4"/><circle cx="3" cy="12.20" r="1.5" fill="#c4c4c4"/></svg>
<div style="left:773.00px;top:48.00px;width:643.00px;height:74.20px;background:#3c3c3c;"></div>
<svg style="left:781.60px;top:61.30px;" width="25.00" height="26.00" viewBox="0 0 25.00 26.00"><path d="M12.50 0.85L24.15 7.60V18.40L12.50 25.15L0.85 18.40V7.60Z M0.85 7.60L12.50 14.00L24.15 7.60 M12.50 14.00V25.15" fill="none" stroke="#bebebe" stroke-width="1.7" stroke-linejoin="round"/></svg>
<svg style="left:806.00px;top:87.30px;" width="9.00" height="5.10" viewBox="0 0 9.00 5.10"><path d="M0 0H9.00L4.50 5.10Z" fill="#c4c4c4"/></svg>
<div style="left:832.40px;top:62.20px;width:16.50px;height:17.60px;background:#2a2a2a;border:1px solid #212121;border-top-color:#0f0f0f;border-radius:3px;"></div>
<svg style="left:832.40px;top:62.20px;" width="16.50" height="17.60" viewBox="0 0 17 17.5"><path d="M3.4 9.6L6.6 13.2L13.6 5.4" fill="none" stroke="#ececec" stroke-width="1.8"/></svg>
<div style="left:857.30px;top:59.20px;width:458.10px;height:22.60px;background:#2a2a2a;border:1px solid #212121;border-top-color:#0f0f0f;border-radius:3px;"></div>
<span style="left:861.30px;top:63px;font-size:15.4px;letter-spacing:0.740px;color:#dcdcdc;-webkit-text-stroke:0.6px #dcdcdc;">MccLogoProjector</span>
<div style="left:1319.20px;top:62.00px;width:16.70px;height:17.70px;background:#2a2a2a;border:1px solid #212121;border-top-color:#0f0f0f;border-radius:3px;"></div>
<span style="left:1342.20px;top:62px;font-size:15.4px;letter-spacing:0.520px;color:#c8c8c8;">Static</span>
<svg style="left:1399.40px;top:67.20px;" width="10.20" height="6.20" viewBox="0 0 10.20 6.20"><path d="M0 0H10.20L5.10 6.20Z" fill="#c4c4c4"/></svg>
<span style="left:824.20px;top:92px;font-size:15.4px;letter-spacing:0.750px;color:#c8c8c8;">Tag</span>
<div style="left:856.00px;top:89.40px;width:253.30px;height:22.60px;background:#515151;border:1px solid #303030;border-radius:3px;"></div>
<span style="left:861.70px;top:91px;font-size:15.4px;letter-spacing:0.243px;color:#dedede;">Untagged</span>
<svg style="left:1092.00px;top:97.60px;" width="9.40" height="6.00" viewBox="0 0 9.40 6.00"><path d="M0 0H9.40L4.70 6.00Z" fill="#c4c4c4"/></svg>
<span style="left:1125.60px;top:92px;font-size:15.4px;letter-spacing:0.450px;color:#c8c8c8;">Layer</span>
<div style="left:1171.00px;top:89.40px;width:240.10px;height:22.60px;background:#515151;border:1px solid #303030;border-radius:3px;"></div>
<span style="left:1176.30px;top:91px;font-size:15.4px;letter-spacing:0.533px;color:#dedede;">Default</span>
<svg style="left:1394.60px;top:97.60px;" width="9.80" height="6.00" viewBox="0 0 9.80 6.00"><path d="M0 0H9.80L4.90 6.00Z" fill="#c4c4c4"/></svg>
<div style="left:773.00px;top:122.00px;width:643.00px;height:1.00px;background:#1a1a1a;"></div>
<div style="left:773.00px;top:123.00px;width:643.00px;height:26.10px;background:#3e3e3e;"></div>
<div style="left:773.00px;top:149.10px;width:643.00px;height:1.00px;background:#343434;"></div>
<svg style="left:781.20px;top:132.20px;" width="9.80" height="9.00" viewBox="0 0 9.80 9.00"><path d="M0 0H9.80L4.90 9.00Z" fill="#6e6e6e"/></svg>
<svg style="left:800.00px;top:128.00px;" width="17" height="15" viewBox="0 0 17 15"><path d="M8.1 2.5V6.5" stroke="#a6ee4a" stroke-width="3.9" stroke-linecap="round"/><path d="M6.4 10.4L2.3 12.8" stroke="#6fd3ff" stroke-width="3.6" stroke-linecap="round"/><path d="M10 10.4L14.1 12.8" stroke="#ff7038" stroke-width="3.6" stroke-linecap="round"/></svg>
<span style="left:849.00px;top:128px;font-size:15.4px;letter-spacing:0.800px;color:#dadada;-webkit-text-stroke:0.6px #dadada;">Transform</span>
<div style="left:1344.70px;top:129.70px;width:12.6px;height:12.6px;border-radius:50%;background:#c8c8c8;"></div>
<span style="left:1347.45px;top:126.30px;font-size:12.4px;line-height:20px;font-weight:bold;color:#3e3e3e;">?</span>
<svg style="left:1369.80px;top:129.70px;" width="12.6" height="12.6" viewBox="0 0 12.6 12.6"><path d="M0 3H5.8M10 3H12.4M0 9.6H1.8M6.4 9.6H12.4" stroke="#c4c4c4" stroke-width="1.3"/><rect x="7.3" y="0.3" width="2.8" height="5.9" rx="1" fill="#c4c4c4"/><rect x="3.7" y="6.5" width="2.8" height="5.9" rx="1" fill="#c4c4c4"/></svg>
<svg style="left:1398.00px;top:128.30px;" width="6" height="15.40" viewBox="0 0 6 15.40"><circle cx="3" cy="3.00" r="1.5" fill="#c4c4c4"/><circle cx="3" cy="7.70" r="1.5" fill="#c4c4c4"/><circle cx="3" cy="12.40" r="1.5" fill="#c4c4c4"/></svg>
<span style="left:797.50px;top:158px;font-size:15.4px;letter-spacing:0.300px;color:#c8c8c8;">Position</span>
<span style="left:1039.80px;top:158px;font-size:15.4px;letter-spacing:0.000px;color:#c8c8c8;">X</span>
<div style="left:1056.70px;top:154.90px;width:102.00px;height:22.40px;background:#2a2a2a;border:1px solid #212121;border-top-color:#0f0f0f;border-radius:3px;"></div>
<span style="left:1061.10px;top:159px;font-size:15.4px;letter-spacing:0.000px;color:#d2d2d2;">0</span>
<span style="left:1165.90px;top:158px;font-size:15.4px;letter-spacing:0.000px;color:#c8c8c8;">Y</span>
<div style="left:1183.20px;top:154.90px;width:101.70px;height:22.40px;background:#2a2a2a;border:1px solid #212121;border-top-color:#0f0f0f;border-radius:3px;"></div>
<span style="left:1187.60px;top:159px;font-size:15.4px;letter-spacing:0.000px;color:#d2d2d2;">0</span>
<span style="left:1292.40px;top:158px;font-size:15.4px;letter-spacing:0.000px;color:#c8c8c8;">Z</span>
<div style="left:1309.40px;top:154.90px;width:102.30px;height:22.40px;background:#2a2a2a;border:1px solid #212121;border-top-color:#0f0f0f;border-radius:3px;"></div>
<span style="left:1313.80px;top:159px;font-size:15.4px;letter-spacing:0.000px;color:#d2d2d2;">0</span>
<span style="left:797.50px;top:183px;font-size:15.4px;letter-spacing:0.229px;color:#c8c8c8;">Rotation</span>
<span style="left:1039.80px;top:183px;font-size:15.4px;letter-spacing:0.000px;color:#c8c8c8;">X</span>
<div style="left:1056.70px;top:179.90px;width:102.00px;height:22.40px;background:#2a2a2a;border:1px solid #212121;border-top-color:#0f0f0f;border-radius:3px;"></div>
<span style="left:1061.10px;top:184px;font-size:15.4px;letter-spacing:0.000px;color:#d2d2d2;">0</span>
<span style="left:1165.90px;top:183px;font-size:15.4px;letter-spacing:0.000px;color:#c8c8c8;">Y</span>
<div style="left:1183.20px;top:179.90px;width:101.70px;height:22.40px;background:#2a2a2a;border:1px solid #212121;border-top-color:#0f0f0f;border-radius:3px;"></div>
<span style="left:1187.60px;top:184px;font-size:15.4px;letter-spacing:0.000px;color:#d2d2d2;">0</span>
<span style="left:1292.40px;top:183px;font-size:15.4px;letter-spacing:0.000px;color:#c8c8c8;">Z</span>
<div style="left:1309.40px;top:179.90px;width:102.30px;height:22.40px;background:#2a2a2a;border:1px solid #212121;border-top-color:#0f0f0f;border-radius:3px;"></div>
<span style="left:1313.80px;top:184px;font-size:15.4px;letter-spacing:0.000px;color:#d2d2d2;">0</span>
<span style="left:797.50px;top:208px;font-size:15.4px;letter-spacing:0.300px;color:#c8c8c8;">Scale</span>
<span style="left:1039.80px;top:208px;font-size:15.4px;letter-spacing:0.000px;color:#c8c8c8;">X</span>
<div style="left:1056.70px;top:204.90px;width:102.00px;height:22.40px;background:#2a2a2a;border:1px solid #212121;border-top-color:#0f0f0f;border-radius:3px;"></div>
<span style="left:1061.70px;top:209px;font-size:15.4px;letter-spacing:0.000px;color:#d2d2d2;">1</span>
<span style="left:1165.90px;top:208px;font-size:15.4px;letter-spacing:0.000px;color:#c8c8c8;">Y</span>
<div style="left:1183.20px;top:204.90px;width:101.70px;height:22.40px;background:#2a2a2a;border:1px solid #212121;border-top-color:#0f0f0f;border-radius:3px;"></div>
<span style="left:1188.20px;top:209px;font-size:15.4px;letter-spacing:0.000px;color:#d2d2d2;">1</span>
<span style="left:1292.40px;top:208px;font-size:15.4px;letter-spacing:0.000px;color:#c8c8c8;">Z</span>
<div style="left:1309.40px;top:204.90px;width:102.30px;height:22.40px;background:#2a2a2a;border:1px solid #212121;border-top-color:#0f0f0f;border-radius:3px;"></div>
<span style="left:1314.40px;top:209px;font-size:15.4px;letter-spacing:0.000px;color:#d2d2d2;">1</span>
<svg style="left:1011.00px;top:208.60px;" width="16" height="14" viewBox="0 0 16 14"><path d="M6.6 10.2H4.4Q1 10.2 1 7Q1 3.8 4.4 3.8H5.2M9.4 3.8H11.6Q15 3.8 15 7Q15 10.2 11.6 10.2H10.8" fill="none" stroke="#c4c4c4" stroke-width="1.3"/><path d="M5.6 7H10.4" stroke="#c4c4c4" stroke-width="1.3"/><path d="M2.6 0.8L13.6 13.2" stroke="#c4c4c4" stroke-width="1.3"/></svg>
<div style="left:773.00px;top:239.00px;width:643.00px;height:1.00px;background:#1a1a1a;"></div>
<div style="left:773.00px;top:240.00px;width:643.00px;height:26.10px;background:#3e3e3e;"></div>
<div style="left:773.00px;top:266.10px;width:643.00px;height:1.00px;background:#343434;"></div>
<svg style="left:781.20px;top:249.00px;" width="9.80" height="9.00" viewBox="0 0 9.80 9.00"><path d="M0 0H9.80L4.90 9.00Z" fill="#6e6e6e"/></svg>
<svg style="left:800.60px;top:245.20px;" width="15.6" height="15" viewBox="0 0 15.6 15"><circle cx="7.6" cy="4.5" r="3.9" fill="#f0f0f0"/><path d="M5.9 6.5L5.6 11.2H9.6L9.3 6.5Z" fill="#f0f0f0"/><rect x="2.8" y="10.8" width="9.6" height="1.4" rx="0.5" fill="#f0f0f0"/><rect x="0.3" y="12.2" width="14.7" height="2.4" rx="0.9" fill="#f0f0f0"/></svg>
<div style="left:823.00px;top:243.80px;width:16.80px;height:17.70px;background:#2a2a2a;border:1px solid #212121;border-top-color:#0f0f0f;border-radius:3px;"></div>
<svg style="left:823.00px;top:243.80px;" width="16.80" height="17.70" viewBox="0 0 17 17.5"><path d="M3.4 9.6L6.6 13.2L13.6 5.4" fill="none" stroke="#ececec" stroke-width="1.8"/></svg>
<span style="left:848.70px;top:245px;font-size:15.4px;letter-spacing:0.328px;color:#dadada;-webkit-text-stroke:0.6px #dadada;">URP Decal Projector</span>
<div style="left:1344.70px;top:246.90px;width:12.6px;height:12.6px;border-radius:50%;background:#c8c8c8;"></div>
<span style="left:1347.45px;top:243.50px;font-size:12.4px;line-height:20px;font-weight:bold;color:#3e3e3e;">?</span>
<svg style="left:1369.80px;top:246.90px;" width="12.6" height="12.6" viewBox="0 0 12.6 12.6"><path d="M0 3H5.8M10 3H12.4M0 9.6H1.8M6.4 9.6H12.4" stroke="#c4c4c4" stroke-width="1.3"/><rect x="7.3" y="0.3" width="2.8" height="5.9" rx="1" fill="#c4c4c4"/><rect x="3.7" y="6.5" width="2.8" height="5.9" rx="1" fill="#c4c4c4"/></svg>
<svg style="left:1398.00px;top:245.50px;" width="6" height="15.40" viewBox="0 0 6 15.40"><circle cx="3" cy="3.00" r="1.5" fill="#c4c4c4"/><circle cx="3" cy="7.70" r="1.5" fill="#c4c4c4"/><circle cx="3" cy="12.40" r="1.5" fill="#c4c4c4"/></svg>
<div style="left:1048.90px;top:271.60px;width:107.10px;height:25.50px;background:#585858;border:1px solid #2e2e2e;border-radius:4px;"></div>
<div style="left:1082.00px;top:273.40px;width:1.00px;height:22.00px;background:#2e2e2e;"></div>
<div style="left:1118.00px;top:273.40px;width:1.00px;height:22.00px;background:#2e2e2e;"></div>
<svg style="left:1056.70px;top:275.60px;" width="18.4" height="18.4" viewBox="0 0 19 19"><rect x="0.7" y="0.7" width="17.4" height="17.4" rx="2.2" fill="none" stroke="#c6c6c6" stroke-width="1.2"/><path d="M0.8 12.6H5.8V18" fill="none" stroke="#c6c6c6" stroke-width="1.2"/><path d="M8 11L14.2 4.8M9.4 4.6H14.4V9.6" fill="none" stroke="#c6c6c6" stroke-width="1.2"/></svg>
<svg style="left:1091.70px;top:275.60px;" width="18.4" height="18.4" viewBox="0 0 19 19"><rect x="0.4" y="0.4" width="4" height="4" rx="0.8" fill="#c6c6c6"/><rect x="14.4" y="0.4" width="4" height="4" rx="0.8" fill="#c6c6c6"/><rect x="0.4" y="14.4" width="4" height="4" rx="0.8" fill="#c6c6c6"/><rect x="14.4" y="14.4" width="4" height="4" rx="0.8" fill="#c6c6c6"/><path d="M5.6 2.4H13.2M5.6 16.4H13.2M2.4 5.6V13.2M16.4 5.6V13.2" stroke="#c6c6c6" stroke-width="1.2"/></svg>
<svg style="left:1127.00px;top:275.00px;" width="20" height="20" viewBox="0 0 20 20"><path d="M10 1.4V8M10 12V18.6M1.4 10H8M12 10H18.6" stroke="#c6c6c6" stroke-width="1.2"/><path d="M7.4 3.8L10 1.2L12.6 3.8M7.4 16.2L10 18.8L12.6 16.2M3.8 7.4L1.2 10L3.8 12.6M16.2 7.4L18.8 10L16.2 12.6" fill="none" stroke="#c6c6c6" stroke-width="1.2"/></svg>
<div style="left:795.40px;top:309.60px;width:615.80px;height:22.80px;background:#404040;border:1px solid #222222;border-radius:3px;"></div>
<span style="left:803.30px;top:311px;font-size:12.6px;letter-spacing:0.700px;color:#7c7c7c;">Decal Scene Editing Mode:</span>
<span style="left:797.50px;top:348px;font-size:15.4px;letter-spacing:0.389px;color:#c8c8c8;">Scale Mode</span>
<div style="left:1037.50px;top:344.80px;width:375.00px;height:23.20px;background:#515151;border:1px solid #303030;border-radius:3px;"></div>
<span style="left:1043.30px;top:347px;font-size:15.4px;letter-spacing:0.400px;color:#dedede;">Scale Invariant</span>
<svg style="left:1394.80px;top:353.20px;" width="10.00" height="5.80" viewBox="0 0 10.00 5.80"><path d="M0 0H10.00L5.00 5.80Z" fill="#c4c4c4"/></svg>
<span style="left:797.50px;top:373px;font-size:15.4px;letter-spacing:0.100px;color:#c8c8c8;">Width</span>
<div style="left:1038.30px;top:370.40px;width:373.40px;height:22.00px;background:#2a2a2a;border:1px solid #212121;border-top-color:#0f0f0f;border-radius:3px;"></div>
<span style="left:1043.20px;top:373px;font-size:15.4px;letter-spacing:0.000px;color:#d2d2d2;">1</span>
<span style="left:797.50px;top:398px;font-size:15.4px;letter-spacing:0.360px;color:#c8c8c8;">Height</span>
<div style="left:1038.30px;top:395.40px;width:373.40px;height:22.20px;background:#2a2a2a;border:1px solid #212121;border-top-color:#0f0f0f;border-radius:3px;"></div>
<span style="left:1043.40px;top:398px;font-size:15.4px;letter-spacing:0.000px;color:#d2d2d2;">1</span>
<span style="left:797.50px;top:423px;font-size:15.4px;letter-spacing:0.340px;color:#c8c8c8;">Projection Depth</span>
<div style="left:1038.30px;top:420.40px;width:373.40px;height:22.20px;background:#2a2a2a;border:1px solid #212121;border-top-color:#0f0f0f;border-radius:3px;"></div>
<span style="left:1043.40px;top:423px;font-size:15.4px;letter-spacing:0.000px;color:#d2d2d2;">1</span>
<span style="left:797.50px;top:448px;font-size:15.4px;letter-spacing:0.550px;color:#c8c8c8;">Pivot</span>
<span style="left:1039.80px;top:448px;font-size:15.4px;letter-spacing:0.000px;color:#c8c8c8;">X</span>
<div style="left:1056.70px;top:445.30px;width:102.00px;height:22.40px;background:#2a2a2a;border:1px solid #212121;border-top-color:#0f0f0f;border-radius:3px;"></div>
<span style="left:1061.10px;top:449px;font-size:15.4px;letter-spacing:0.000px;color:#d2d2d2;">0</span>
<span style="left:1165.90px;top:448px;font-size:15.4px;letter-spacing:0.000px;color:#c8c8c8;">Y</span>
<div style="left:1183.20px;top:445.30px;width:101.70px;height:22.40px;background:#2a2a2a;border:1px solid #212121;border-top-color:#0f0f0f;border-radius:3px;"></div>
<span style="left:1187.60px;top:449px;font-size:15.4px;letter-spacing:0.000px;color:#d2d2d2;">0</span>
<span style="left:1292.40px;top:448px;font-size:15.4px;letter-spacing:0.000px;color:#c8c8c8;">Z</span>
<div style="left:1309.40px;top:445.30px;width:102.30px;height:22.40px;background:#2a2a2a;border:1px solid #212121;border-top-color:#0f0f0f;border-radius:3px;"></div>
<span style="left:1313.80px;top:449px;font-size:15.4px;letter-spacing:0.000px;color:#d2d2d2;">0.5</span>
<span style="left:797.50px;top:483px;font-size:15.4px;letter-spacing:0.386px;color:#c8c8c8;">Material</span>
<div style="left:1038.30px;top:480.50px;width:373.40px;height:22.00px;background:#2a2a2a;border:1px solid #212121;border-top-color:#0f0f0f;border-radius:3px;"></div>
<div style="left:1387.60px;top:481.50px;width:23.10px;height:20.00px;background:#373737;border-radius:0 2px 2px 0;"></div>
<svg style="left:1393.00px;top:484.20px;" width="13" height="13" viewBox="0 0 13 13"><circle cx="6.5" cy="6.5" r="5.6" fill="none" stroke="#c4c4c4" stroke-width="1.3"/><circle cx="6.5" cy="6.5" r="2" fill="#c4c4c4"/></svg>
<svg style="left:1042.60px;top:484.90px;" width="12.6" height="12.6" viewBox="0 0 12.6 12.6"><circle cx="6.3" cy="6.3" r="5.6" fill="#2b3238" stroke="#5db5e2" stroke-width="1.1"/><circle cx="4.7" cy="4.5" r="4" fill="#7dd4fc"/></svg>
<span style="left:1059.10px;top:483px;font-size:15.4px;letter-spacing:0.175px;color:#d2d2d2;">Decal</span>
<span style="left:797.50px;top:508px;font-size:15.4px;letter-spacing:0.233px;color:#c8c8c8;">Rendering Layers</span>
<div style="left:1037.50px;top:504.80px;width:375.00px;height:23.00px;background:#515151;border:1px solid #303030;border-radius:3px;"></div>
<span style="left:1043.30px;top:507px;font-size:15.4px;letter-spacing:0.444px;color:#dedede;">Light Layer default</span>
<svg style="left:1394.80px;top:513.20px;" width="10.00" height="5.80" viewBox="0 0 10.00 5.80"><path d="M0 0H10.00L5.00 5.80Z" fill="#c4c4c4"/></svg>
<span style="left:816.20px;top:533px;font-size:15.4px;letter-spacing:0.450px;color:#c8c8c8;">Tilling</span>
<span style="left:1039.80px;top:533px;font-size:15.4px;letter-spacing:0.000px;color:#c8c8c8;">X</span>
<div style="left:1056.70px;top:530.20px;width:102.00px;height:22.20px;background:#2a2a2a;border:1px solid #212121;border-top-color:#0f0f0f;border-radius:3px;"></div>
<span style="left:1061.70px;top:534px;font-size:15.4px;letter-spacing:0.000px;color:#d2d2d2;">1</span>
<span style="left:1165.90px;top:533px;font-size:15.4px;letter-spacing:0.000px;color:#c8c8c8;">Y</span>
<div style="left:1183.20px;top:530.20px;width:101.70px;height:22.20px;background:#2a2a2a;border:1px solid #212121;border-top-color:#0f0f0f;border-radius:3px;"></div>
<span style="left:1188.20px;top:534px;font-size:15.4px;letter-spacing:0.000px;color:#d2d2d2;">1</span>
<span style="left:816.20px;top:558px;font-size:15.4px;letter-spacing:0.220px;color:#c8c8c8;">Offset</span>
<span style="left:1039.80px;top:558px;font-size:15.4px;letter-spacing:0.000px;color:#c8c8c8;">X</span>
<div style="left:1056.70px;top:555.20px;width:102.00px;height:22.20px;background:#2a2a2a;border:1px solid #212121;border-top-color:#0f0f0f;border-radius:3px;"></div>
<span style="left:1061.10px;top:559px;font-size:15.4px;letter-spacing:0.000px;color:#d2d2d2;">0</span>
<span style="left:1165.90px;top:558px;font-size:15.4px;letter-spacing:0.000px;color:#c8c8c8;">Y</span>
<div style="left:1183.20px;top:555.20px;width:101.70px;height:22.20px;background:#2a2a2a;border:1px solid #212121;border-top-color:#0f0f0f;border-radius:3px;"></div>
<span style="left:1187.60px;top:559px;font-size:15.4px;letter-spacing:0.000px;color:#d2d2d2;">0</span>
<span style="left:816.20px;top:583px;font-size:15.4px;letter-spacing:0.217px;color:#c8c8c8;">Opacity</span>
<div style="left:1038.00px;top:590.20px;width:1302.00px;height:2.60px;background:#5e5e5e;width:302px;border-radius:1.3px;"></div>
<div style="left:1330.6px;top:585.1px;width:12.8px;height:12.8px;border-radius:50%;background:#999999;"></div>
<div style="left:1349.00px;top:580.40px;width:62.40px;height:22.00px;background:#2a2a2a;border:1px solid #212121;border-top-color:#0f0f0f;border-radius:3px;"></div>
<span style="left:1353.40px;top:583px;font-size:15.4px;letter-spacing:0.000px;color:#d2d2d2;">1</span>
<span style="left:797.50px;top:608px;font-size:15.4px;letter-spacing:0.400px;color:#c8c8c8;">Draw Distance</span>
<div style="left:1038.30px;top:605.00px;width:373.40px;height:22.40px;background:#2a2a2a;border:1px solid #212121;border-top-color:#0f0f0f;border-radius:3px;"></div>
<span style="left:1043.40px;top:608px;font-size:15.4px;letter-spacing:0.367px;color:#d2d2d2;">1000</span>
<span style="left:816.20px;top:633px;font-size:15.4px;letter-spacing:0.033px;color:#c8c8c8;">Start Fade</span>
<div style="left:1038.00px;top:640.20px;width:305.00px;height:2.60px;background:#5e5e5e;border-radius:1.3px;"></div>
<div style="left:1300.9px;top:635.1px;width:12.6px;height:12.6px;border-radius:50%;background:#999999;"></div>
<div style="left:1349.00px;top:630.60px;width:62.40px;height:21.80px;background:#2a2a2a;border:1px solid #212121;border-top-color:#0f0f0f;border-radius:3px;"></div>
<span style="left:1353.20px;top:633px;font-size:15.4px;letter-spacing:0.800px;color:#d2d2d2;">0.9</span>
<span style="left:797.50px;top:658px;font-size:15.4px;letter-spacing:0.100px;color:#7a7a7a;">Angle Fade</span>
<div style="left:1038.00px;top:665.00px;width:367.00px;height:2.60px;background:#555555;border-radius:1.3px;"></div>
<div style="left:1395.8px;top:660.1px;width:17.3px;height:13px;border-radius:6.5px;background:#6c6c6c;"></div>
<div style="left:1404.00px;top:660.30px;width:1.00px;height:12.60px;background:#4c4c4c;"></div>
<div style="left:795.40px;top:680.40px;width:615.20px;height:47.00px;background:#404040;border:1px solid #222222;border-radius:3px;"></div>
<svg style="left:802.00px;top:685.00px;" width="34" height="36.4" viewBox="0 0 34 36.4"><circle cx="16.7" cy="16.8" r="16.2" fill="#eeeeee"/><path d="M21.4 31.6L30 35.3L29.2 26Z" fill="#eeeeee"/><path d="M14.3 5.8Q16.7 4.9 19.1 5.8L18 20H15.4Z" fill="#3c3c3c"/><circle cx="16.7" cy="24.5" r="2.7" fill="#3c3c3c"/></svg>
<span style="left:841.20px;top:694px;font-size:12.6px;letter-spacing:0.745px;color:#c8c8c8;">Decal Angle Fade is not enabled in Shader. In ShaderGraph enable Angle Fade option.</span>
<div style="left:773.00px;top:736.00px;width:643.00px;height:1.00px;background:#2a2a2a;"></div>
<div style="left:773.00px;top:737.00px;width:643.00px;height:69.00px;background:#3b3b3b;border-bottom:1px solid #2f2f2f;"></div>
<div style="left:792.80px;top:744.80px;width:40.20px;height:40.40px;background:#555555;"></div>
<div style="left:798.00px;top:750.20px;width:30.30px;height:30.30px;background:#8b8b8b;"></div>
<span style="left:842.90px;top:744px;font-size:16.6px;letter-spacing:0.253px;color:#898989;">Decal (Material)</span>
<svg style="left:782.20px;top:786.00px;" width="8.80" height="10.00" viewBox="0 0 8.80 10.00"><path d="M0 0L8.80 5.00L0 10.00Z" fill="#7c7c7c"/></svg>
<span style="left:839.60px;top:778px;font-size:15.4px;letter-spacing:0.140px;color:#909090;">Shader</span>
<div style="left:903.20px;top:775.40px;width:388.70px;height:22.60px;background:#474747;border:1px solid #353535;border-radius:3px;"></div>
<span style="left:908.90px;top:777px;font-size:15.4px;letter-spacing:0.172px;color:#9c9c9c;">Shader Graphs/Decal</span>
<svg style="left:1274.80px;top:783.30px;" width="9.40" height="5.20" viewBox="0 0 9.40 5.20"><path d="M0 0H9.40L4.70 5.20Z" fill="#8a8a8a"/></svg>
<div style="left:1294.90px;top:772.00px;width:57.10px;height:23.00px;background:#4a4a4a;border:1px solid #353535;border-radius:3px;"></div>
<span style="left:1303.40px;top:774px;font-size:15.4px;letter-spacing:-0.183px;color:#9c9c9c;">Edit...</span>
<div style="left:1357.20px;top:775.00px;width:54.70px;height:22.60px;background:#414141;border:1px solid #353535;border-radius:3px;"></div>
<svg style="left:1368.00px;top:781.00px;" width="14" height="11" viewBox="0 0 14 11"><path d="M3.6 1.4H13.4M5.2 5.4H13.4M5.2 9.4H13.4" stroke="#8a8a8a" stroke-width="1.2"/><path d="M0.4 1.4H2.2M2.6 5.4H3.8M2.6 9.4H3.8" stroke="#8a8a8a" stroke-width="1.2"/></svg>
<svg style="left:1394.60px;top:783.30px;" width="9.60" height="5.20" viewBox="0 0 9.60 5.20"><path d="M0 0H9.60L4.80 5.20Z" fill="#8a8a8a"/></svg>
<div style="left:1360.50px;top:746.80px;width:12.6px;height:12.6px;border-radius:50%;background:#e2e2e2;"></div>
<span style="left:1363.25px;top:743.40px;font-size:12.4px;line-height:20px;font-weight:bold;color:#3b3b3b;">?</span>
<svg style="left:1380.80px;top:746.80px;" width="12.6" height="12.6" viewBox="0 0 12.6 12.6"><path d="M0 3H5.8M10 3H12.4M0 9.6H1.8M6.4 9.6H12.4" stroke="#8a8a8a" stroke-width="1.3"/><rect x="7.3" y="0.3" width="2.8" height="5.9" rx="1" fill="#8a8a8a"/><rect x="3.7" y="6.5" width="2.8" height="5.9" rx="1" fill="#8a8a8a"/></svg>
<svg style="left:1403.90px;top:745.40px;" width="6" height="15.60" viewBox="0 0 6 15.60"><circle cx="3" cy="3.00" r="1.5" fill="#e2e2e2"/><circle cx="3" cy="7.80" r="1.5" fill="#e2e2e2"/><circle cx="3" cy="12.60" r="1.5" fill="#e2e2e2"/></svg>
<div style="left:773.00px;top:825.00px;width:643.00px;height:1.20px;background:#1c1c1c;"></div>
<div style="left:952.10px;top:836.00px;width:286.70px;height:30.20px;background:#585858;border:1px solid #303030;border-radius:3px;"></div>
<span style="left:1037.70px;top:843px;font-size:15.4px;letter-spacing:0.250px;color:#e4e4e4;">Add Component</span>
</div></body></html>
